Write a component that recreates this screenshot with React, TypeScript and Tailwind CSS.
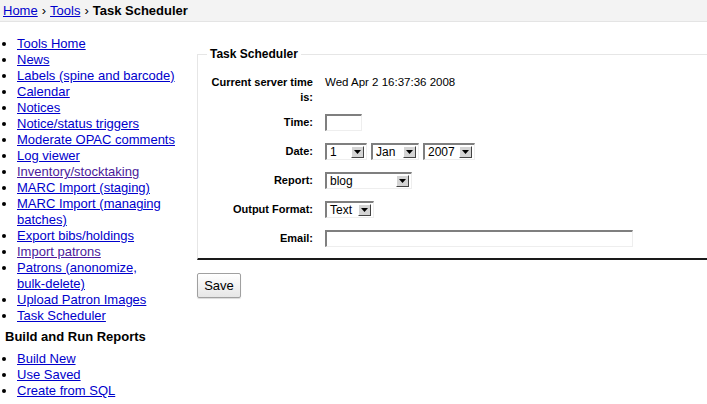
import React from 'react';

const navLinks: { label: React.ReactNode; key: string; visited?: boolean }[] = [
  { key: 'home', label: 'Tools Home' },
  { key: 'news', label: 'News' },
  { key: 'labels', label: 'Labels (spine and barcode)' },
  { key: 'cal', label: 'Calendar' },
  { key: 'notices', label: 'Notices' },
  { key: 'triggers', label: 'Notice/status triggers' },
  { key: 'opac', label: 'Moderate OPAC comments' },
  { key: 'log', label: 'Log viewer' },
  { key: 'inv', label: 'Inventory/stocktaking', visited: true },
  { key: 'marc1', label: 'MARC Import (staging)' },
  { key: 'marc2', label: 'MARC Import (managing batches)' },
  { key: 'export', label: 'Export bibs/holdings' },
  { key: 'import', label: 'Import patrons', visited: true },
  {
    key: 'anon',
    label: (
      <>
        Patrons (anonomize, <span className="whitespace-nowrap">bulk-delete)</span>
      </>
    ),
  },
  { key: 'upload', label: 'Upload Patron Images' },
  { key: 'task', label: 'Task Scheduler' },
];

const reportLinks = ['Build New', 'Use Saved', 'Create from SQL'];

const Arrow = () => (
  <span className="ml-auto mr-[2px] flex h-[12px] w-[13px] items-center justify-center border border-t-white border-l-white border-r-[#444] border-b-[#444] bg-[#d4d4d4]">
    <svg width="7" height="4" viewBox="0 0 7 4">
      <polygon points="0,0 7,0 3.5,4" fill="#000" />
    </svg>
  </span>
);

const Select = ({ value, width }: { value: string; width: string }) => (
  <div
    className={`flex h-[17px] items-center border-t-2 border-l-2 border-r border-b border-t-[#7f7f7f] border-l-[#7f7f7f] border-r-[#eeeeee] border-b-[#eeeeee] bg-white pl-[3px] text-[12px] leading-none text-black ${width}`}
  >
    <span>{value}</span>
    <Arrow />
  </div>
);

const TextInput = ({ width }: { width: string }) => (
  <div
    className={`h-[17px] border-t-2 border-l-2 border-r border-b border-t-[#7f7f7f] border-l-[#7f7f7f] border-r-[#eeeeee] border-b-[#eeeeee] bg-white ${width}`}
  />
);

const Row = ({ label, children }: { label: string; children: React.ReactNode }) => (
  <div className="flex h-[18px] items-center">
    <div className="w-[106px] text-right text-[11px] font-bold">{label}</div>
    <div className="ml-[12px] flex items-center gap-[4px]">{children}</div>
  </div>
);

export default function App() {
  return (
    <div className="min-h-[404px] w-[707px] overflow-hidden bg-white font-['Liberation_Sans',Arial,sans-serif] text-black">
      {/* breadcrumbs */}
      <div className="flex h-[22px] items-center border-b border-[#e4e4e4] bg-[#f3f3f3] pl-[3px] text-[13px]">
        <a className="text-[#0000cc] underline">Home</a>
        <span className="mx-[4px]">›</span>
        <a className="text-[#0000cc] underline">Tools</a>
        <span className="mx-[4px]">›</span>
        <span className="font-bold">Task Scheduler</span>
      </div>

      <div className="flex">
        {/* left nav */}
        <div className="w-[197px] shrink-0">
          <ul className="mt-[14px] w-[185px] list-disc pl-[17px] text-[13px] leading-[16px]">
            {navLinks.map(l => (
              <li key={l.key}>
                <a className={`underline ${l.visited ? 'text-[#4b1a9b]' : 'text-[#0000cc]'}`}>{l.label}</a>
              </li>
            ))}
          </ul>
          <h5 className="mt-[5px] pl-[5px] text-[13px] font-bold leading-[16px]">Build and Run Reports</h5>
          <ul className="mt-[6px] list-disc pl-[17px] text-[13px] leading-[16px]">
            {reportLinks.map(l => (
              <li key={l}>
                <a className="text-[#0000cc] underline">{l}</a>
              </li>
            ))}
          </ul>
        </div>

        {/* main */}
        <div className="flex-1">
          <fieldset className="mt-[25px] border-t border-l border-r-0 border-b-2 border-t-[#e6e6e6] border-l-[#e6e6e6] border-b-[#1a1a1a] pb-[11px] pl-[9px]">
            <legend className="px-[3px] text-[12px] font-bold leading-[14px]">Task Scheduler</legend>
            <div className="mt-[14px] flex">
              <div className="w-[106px] text-right text-[11px] font-bold leading-[15px]">
                Current server time is:
              </div>
              <div className="ml-[12px] text-[11.5px] leading-[15px]">Wed Apr 2 16:37:36 2008</div>
            </div>
            <div className="mt-[8px] flex flex-col gap-[11px]">
              <Row label="Time:">
                <TextInput width="w-[37px]" />
              </Row>
              <Row label="Date:">
                <Select value="1" width="w-[42px]" />
                <Select value="Jan" width="w-[48px]" />
                <Select value="2007" width="w-[52px]" />
              </Row>
              <Row label="Report:">
                <Select value="blog" width="w-[87px]" />
              </Row>
              <Row label="Output Format:">
                <Select value="Text" width="w-[49px]" />
              </Row>
              <Row label="Email:">
                <TextInput width="w-[308px]" />
              </Row>
            </div>
          </fieldset>
          <button className="mt-[13px] h-[25px] w-[44px] rounded-[2px] border border-[#a0a0a0] bg-gradient-to-b from-white to-[#e6e6e6] text-[13px] shadow-[0_1px_1px_rgba(0,0,0,0.15)]">
            Save
          </button>
        </div>
      </div>
    </div>
  );
}
